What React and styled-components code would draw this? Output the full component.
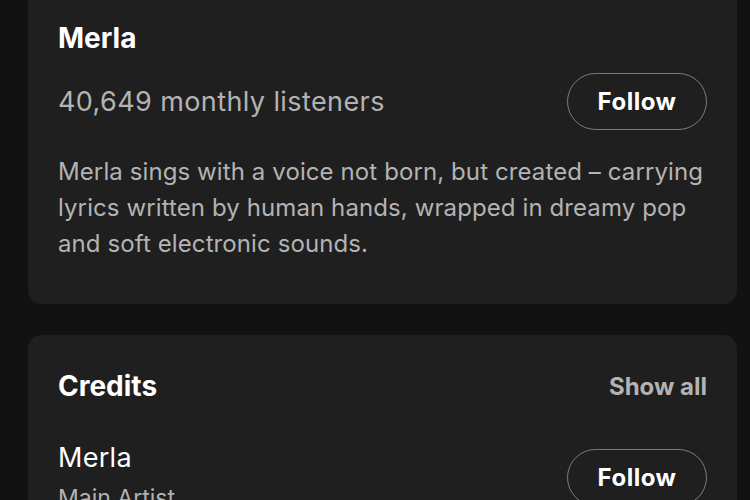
import React from "react";
import styled, { createGlobalStyle } from "styled-components";

const Global = createGlobalStyle`
  html, body { margin: 0; padding: 0; background: #121212; }
  body { font-family: Inter, "Noto Sans", sans-serif; color: #fff; overflow: hidden; }
  * { box-sizing: border-box; }
`;

const Page = styled.div`
  display: flex;
  flex-direction: column;
  gap: 31px;
  padding: 0 13px 0 28px;
  margin-top: -16px;
`;

const Card = styled.section`
  background: #1f1f1f;
  border-radius: 14px;
  padding: ${(p) => p.$pad};
  display: flex;
  flex-direction: column;
`;

const Title = styled.h2`
  margin: 0;
  font-size: 28px;
  line-height: 32px;
  font-weight: 700;
  color: #fff;
  letter-spacing: 0;
`;

const Row = styled.div`
  display: flex;
  align-items: center;
  justify-content: space-between;
  margin-top: ${(p) => p.$mt || 0}px;
`;

const Listeners = styled.span`
  font-size: 27px;
  line-height: 32px;
  color: #b3b3b3;
  font-weight: 400;
  letter-spacing: 0.4px;
`;

const FollowButton = styled.button`
  width: 140px;
  height: 57px;
  border-radius: 999px;
  border: 1px solid #7c7c7c;
  background: transparent;
  color: #fff;
  font-family: inherit;
  font-size: 24px;
  font-weight: 700;
  letter-spacing: 0.5px;
  flex-shrink: 0;
  padding: 0;
`;

const Description = styled.p`
  margin: 24px 0 0;
  font-size: 24px;
  line-height: 36px;
  color: #b3b3b3;
  letter-spacing: 0.1px;
`;

const ShowAll = styled.span`
  font-size: 24px;
  font-weight: 700;
  color: #b3b3b3;
`;

const Info = styled.div`
  display: flex;
  flex-direction: column;
  gap: 10px;
`;

const Name = styled.span`
  font-size: 27px;
  line-height: 32px;
  color: #fff;
  letter-spacing: 0.3px;
`;

const Role = styled.span`
  font-size: 23px;
  line-height: 28px;
  color: #b3b3b3;
`;

export default function App() {
  return (
    <>
      <Global />
      <Page>
        <Card $pad="38px 30px 42px">
          <Title>Merla</Title>
          <Row $mt={19}>
            <Listeners>40,649 monthly listeners</Listeners>
            <FollowButton>Follow</FollowButton>
          </Row>
          <Description>
            Merla sings with a voice not born, but created – carrying lyrics
            written by human hands, wrapped in dreamy pop and soft electronic
            sounds.
          </Description>
        </Card>
        <Card $pad="35px 30px 40px">
          <Row>
            <Title>Credits</Title>
            <ShowAll>Show all</ShowAll>
          </Row>
          <Row $mt={40}>
            <Info>
              <Name>Merla</Name>
              <Role>Main Artist</Role>
            </Info>
            <FollowButton>Follow</FollowButton>
          </Row>
        </Card>
      </Page>
    </>
  );
}
